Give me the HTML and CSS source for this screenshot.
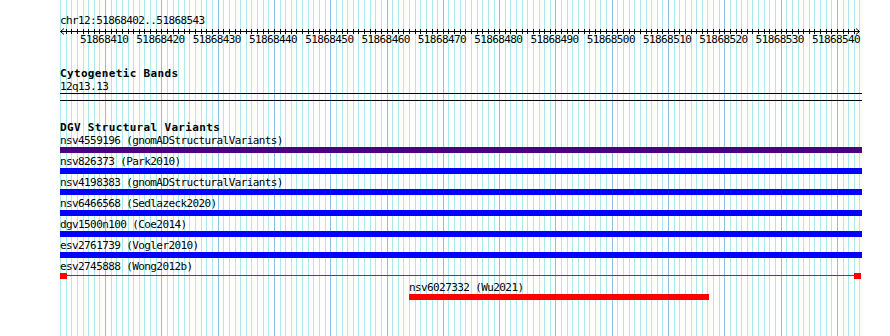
FILE: index.html
```html
<!DOCTYPE html>
<html lang="en">
<head>
<meta charset="UTF-8">
<meta name="viewport" content="width=device-width, initial-scale=1.0">
<title>chr12:51868402..51868543</title>
<link rel="stylesheet" href="styles.css">
</head>
<body>

<div class="browser">
  <!-- base grid, one line per base (filled in by script.js) -->
  <svg class="grid" width="802" height="336" shape-rendering="crispEdges"></svg>

  <!-- Ruler -->
  <div class="ruler">
    <div class="locus">chr12:51868402..51868543</div>
    <svg class="scale" width="802" height="7">
      <path class="scale-line" d="M0.5 4.5 H799.5 M4 1.5 L0.5 4.5 L4 7.5 M796 1.5 L799.5 4.5 L796 7.5" />
      <path class="scale-ticks" d="" shape-rendering="crispEdges" />
    </svg>
    <div class="scale-labels">
      <span>51868410</span>
      <span>51868420</span>
      <span>51868430</span>
      <span>51868440</span>
      <span>51868450</span>
      <span>51868460</span>
      <span>51868470</span>
      <span>51868480</span>
      <span>51868490</span>
      <span>51868500</span>
      <span>51868510</span>
      <span>51868520</span>
      <span>51868530</span>
      <span>51868540</span>
    </div>
  </div>

  <!-- Cytogenetic Bands -->
  <section class="track cyto">
    <h3 class="track-title">Cytogenetic Bands</h3>
    <div class="band-label">12q13.13</div>
    <div class="band"></div>
  </section>

  <!-- DGV Structural Variants -->
  <section class="track dgv">
    <h3 class="track-title">DGV Structural Variants</h3>
    <div class="features">
      <div class="feature">
        <div class="feature-label">nsv4559196 (gnomADStructuralVariants)</div>
        <div class="bar bar-purple"></div>
      </div>
      <div class="feature">
        <div class="feature-label">nsv826373 (Park2010)</div>
        <div class="bar bar-blue"></div>
      </div>
      <div class="feature">
        <div class="feature-label">nsv4198383 (gnomADStructuralVariants)</div>
        <div class="bar bar-blue"></div>
      </div>
      <div class="feature">
        <div class="feature-label">nsv6466568 (Sedlazeck2020)</div>
        <div class="bar bar-blue"></div>
      </div>
      <div class="feature">
        <div class="feature-label">dgv1500n100 (Coe2014)</div>
        <div class="bar bar-blue"></div>
      </div>
      <div class="feature">
        <div class="feature-label">esv2761739 (Vogler2010)</div>
        <div class="bar bar-blue"></div>
      </div>
      <div class="feature">
        <div class="feature-label">esv2745888 (Wong2012b)</div>
        <div class="span-bar">
          <div class="span-end"></div>
          <div class="span-line"></div>
          <div class="span-end"></div>
        </div>
      </div>
      <div class="feature feature-wu">
        <div class="feature-label">nsv6027332 (Wu2021)</div>
        <div class="bar bar-red"></div>
      </div>
    </div>
  </section>
</div>

<script src="script.js"></script>
</body>
</html>
```

FILE: styles.css
```css
/* Page */
body {
  margin: 0;
  background: #fff;
  font-family: "DejaVu Sans Mono", monospace;
  font-size: 11px;
  line-height: 12px;
  letter-spacing: -0.6px;
  color: #000;
}

.browser {
  position: relative;
  margin-left: 60px;
  width: 802px;
  height: 336px;
  overflow: hidden;
}

/* Grid behind the tracks */
.grid {
  position: absolute;
  top: 0;
  left: 0;
}

.grid .minor {
  stroke: #aaeaee;
  stroke-width: 1;
}

.grid .major {
  stroke: #8cc0e6;
  stroke-width: 1;
}

.ruler,
.track {
  position: relative;
}

/* Ruler */
.ruler {
  padding-top: 15px;
}

.locus {
  height: 12px;
  white-space: nowrap;
}

.scale {
  display: block;
  overflow: visible;
}

.scale-line,
.scale-ticks {
  fill: none;
  stroke: #000;
  stroke-width: 1;
}

.scale-labels {
  display: flex;
  padding-left: 16px;
  height: 12px;
}

.scale-labels span {
  flex: none;
  width: 56.3px;
  text-align: center;
  white-space: nowrap;
}

/* Tracks */
.track-title {
  margin: 0;
  height: 12px;
  font-size: 11px;
  font-weight: bold;
  letter-spacing: 0.34px;
  white-space: nowrap;
}

.cyto {
  margin-top: 22px;
}

.band-label {
  margin-top: 1px;
  height: 12px;
}

.band {
  height: 6px;
  border-top: 1px solid #000;
  border-bottom: 1px solid #000;
}

.dgv {
  margin-top: 21px;
}

.features {
  display: flex;
  flex-direction: column;
  gap: 3px;
  margin-top: 1px;
}

.feature-label {
  height: 12px;
  white-space: nowrap;
}

.bar {
  height: 6px;
}

.bar-purple {
  background-color: #4b0082;
}

.bar-blue {
  background-color: #0000ff;
}

.bar-red {
  background-color: #ff0000;
}

/* variant wider than the view: end blocks joined by a line */
.span-bar {
  display: flex;
  width: 801px;
  height: 6px;
}

.span-end {
  flex: none;
  width: 7px;
  background-color: #ff0000;
}

.span-line {
  flex: 1;
  height: 1px;
  margin-top: 2px;
  background-color: #ff0000;
}

.feature-wu {
  margin-left: 349px;
  width: 300px;
}
```

FILE: script.js
```js
// view: chr12:51868402..51868543, 5.63 px per base
var start = 51868402;
var end = 51868544;
var pxPerBase = 5.63;
var svgNS = "http://www.w3.org/2000/svg";

var grid = document.querySelector(".grid");
var ticks = [];
var majors = [];

for (var b = start; b <= end; b++) {
  var x = Math.round((b - start) * pxPerBase) + 0.5;
  if (b % 10 == 0) {
    majors.push(x);
  } else {
    var line = document.createElementNS(svgNS, "line");
    line.setAttribute("class", "minor");
    line.setAttribute("x1", x);
    line.setAttribute("x2", x);
    line.setAttribute("y1", 0);
    line.setAttribute("y2", 336);
    grid.appendChild(line);
  }
  // ruler ticks, not on the arrow tips
  if (b > start && b < end) {
    ticks.push("M" + x + " 2 V7");
  }
}

// major lines drawn last so they sit on top
majors.forEach(function(x) {
  var line = document.createElementNS(svgNS, "line");
  line.setAttribute("class", "major");
  line.setAttribute("x1", x);
  line.setAttribute("x2", x);
  line.setAttribute("y1", 0);
  line.setAttribute("y2", 336);
  grid.appendChild(line);
});

document.querySelector(".scale-ticks").setAttribute("d", ticks.join(" "));
```
